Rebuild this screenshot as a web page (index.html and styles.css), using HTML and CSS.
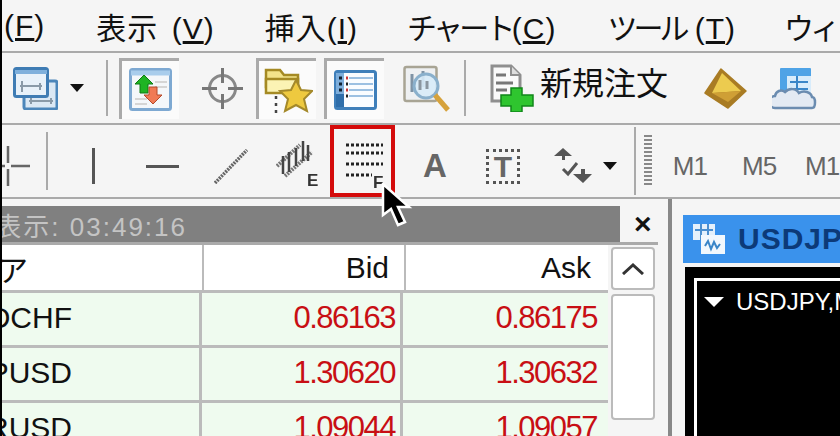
FILE: index.html
```html
<!DOCTYPE html>
<html lang="ja">
<head>
    <meta charset="UTF-8">
    <title>MetaTrader</title>
    <link rel="stylesheet" href="styles.css">
</head>
<body>
    <div class="edge"></div>
    <div class="app">
        <div class="menu">
            <span class="menu-clip">(<u>F</u>)</span>
            <span class="m-view">表示 (<u>V</u>)</span>
            <span class="m-insert">挿入(<u>I</u>)</span>
            <span class="m-chart"><span class="kana">チャート</span>(<u>C</u>)</span>
            <span class="m-tools"><span class="kana-tight">ツール</span> (<u>T</u>)</span>
            <span class="m-win kana">ウィンドウ</span>
        </div>

        <!-- main toolbar -->
        <div class="toolbar tb-main">
            <svg class="i-profiles" width="45" height="43" viewBox="0 0 45 43">
                <rect x="11" y="14" width="33" height="28" rx="2" fill="#dbe8f4" stroke="#4c86ba" stroke-width="3"/>
                <path d="M16 34h24M18 31v6M38 31v6" stroke="#8a9aa8" stroke-width="2" fill="none"/>
                <rect x="1.5" y="1.5" width="33" height="28" rx="2" fill="#e8f1f9" stroke="#3f7cb4" stroke-width="3"/>
                <path d="M2 5h32" stroke="#7fb0dc" stroke-width="4"/>
                <path d="M9 14v11M7 19h22M27 16v7" stroke="#8a9aa8" stroke-width="2" fill="none"/>
            </svg>
            <span class="arrow i-drop"></span>
            <span class="sep s-one"></span>
            <span class="toggle t-watch">
                <svg width="43" height="43" viewBox="0 0 43 43">
                    <rect x="1.5" y="1.5" width="40" height="40" rx="2" fill="#f4f7fa" stroke="#7ea9d2" stroke-width="3"/>
                    <path d="M2 5h39" stroke="#a9cdec" stroke-width="5"/>
                    <path d="M26 14h12M26 19h12M6 31h12M6 36h12" stroke="#d5d5d5" stroke-width="2"/>
                    <path d="M15 7l9 9h-5v9h-8v-9H6z" fill="#1fb424" stroke="#0f7a14"/>
                    <path d="M24 36l9-9h-5v-8h-8v8h-5z" fill="#f07a55" stroke="#b4492b"/>
                </svg>
            </span>
            <svg class="i-cross" width="43" height="43" viewBox="0 0 43 43">
                <circle cx="21.5" cy="21.5" r="13" fill="none" stroke="#888" stroke-width="3"/>
                <path d="M21.5 1v15M21.5 27v15M1 21.5h15M27 21.5h15" stroke="#777" stroke-width="3"/>
            </svg>
            <span class="toggle t-nav">
                <svg width="50" height="50" viewBox="0 0 50 50">
                    <path d="M3 5h14l4 5h14v12H3z" fill="#f3e38a" stroke="#a58a24" stroke-width="2.5"/>
                    <path d="M3 14h32v14H3z" fill="#fbf3b4" stroke="#a58a24" stroke-width="2.5"/>
                    <path d="M13 31v3M13 38v3M13 45v3" stroke="#444" stroke-width="2.5"/>
                    <path d="M33 15l5 10 11 1-8 8 3 12-11-6-11 6 3-12-8-8 11-1z" fill="#eec93f" stroke="#a4892a" stroke-width="2"/>
                </svg>
            </span>
            <span class="toggle t-data">
                <svg width="43" height="40" viewBox="0 0 43 40">
                    <rect x="1.5" y="1.5" width="40" height="37" rx="2" fill="#fafcff" stroke="#3f7fba" stroke-width="3"/>
                    <rect x="2" y="3" width="8" height="34" fill="#7eaedb"/>
                    <rect x="2" y="24" width="8" height="13" fill="#2f6eaa"/>
                    <path d="M15 8h24M15 14h24M15 20h24M15 26h24" stroke="#9cc0e2" stroke-width="2"/>
                    <path d="M5 8h3M5 14h3M5 20h3" stroke="#123" stroke-width="3"/>
                    <path d="M12 8h2M12 20h2" stroke="#c33" stroke-width="3"/>
                    <path d="M12 14h2M12 26h2" stroke="#222" stroke-width="3"/>
                </svg>
            </span>
            <svg class="i-tester" width="48" height="49" viewBox="0 0 48 49">
                <rect x="1.5" y="3" width="32" height="34" rx="2" fill="#eef0f2" stroke="#a8a494" stroke-width="2.5"/>
                <path d="M9 10v18M20 7v16" stroke="#7f93a5" stroke-width="3"/>
                <circle cx="23" cy="22" r="12" fill="#d7ebf8" fill-opacity=".9" stroke="#8ab0cc" stroke-width="3"/>
                <path d="M17 16v10M24 17v8" stroke="#8a96a0" stroke-width="3"/>
                <path d="M32 31l13 15" stroke="#d6a23c" stroke-width="5"/>
            </svg>
            <span class="sep s-two"></span>
            <svg class="i-order" width="44" height="48" viewBox="0 0 44 48">
                <path d="M2 2h19l9 9v26H2z" fill="#fafafa" stroke="#8f8f8f" stroke-width="3"/>
                <path d="M21 2v9h9" fill="#ddd" stroke="#8f8f8f" stroke-width="2"/>
                <path d="M6 11h10M6 19h17M6 26h11" stroke="#777" stroke-width="3"/>
                <path d="M21 24h11v7h11v11H32v6H21v-6H11V31h10z" fill="#2fc52f" stroke="#10871a" stroke-width="1.5"/>
            </svg>
            <span class="order-label">新規注文</span>
            <svg class="i-gold" width="43" height="41" viewBox="0 0 43 41">
                <path d="M17 1L42 23 24 40 1 25z" fill="#a97c24" stroke="#a97c24" stroke-width="1.5" stroke-linejoin="round"/>
                <path d="M18 5L37 23 8 25z" fill="#eccb4f"/>
                <path d="M8 25L37 23 24 34z" fill="#cf9f35"/>
            </svg>
            <svg class="i-cloud" width="45" height="43" viewBox="0 0 45 43">
                <rect x="8" y="1" width="31" height="31" rx="1" fill="#4fa3e6"/>
                <rect x="15" y="9" width="24" height="22" fill="#d8ecfb"/>
                <path d="M18 15h18M18 22h18M25 9v22" stroke="#3a86c8" stroke-width="2"/>
                <path d="M3 41a6 6 0 0 1 0-12c1-5 6-7 10-4 4-4 11-4 14 1 5-3 12-1 13 4 4 0 4 11 0 11z" fill="#e3eaf3" stroke="#6b8cb0" stroke-width="2.5"/>
            </svg>
        </div>

        <!-- drawing toolbar -->
        <div class="toolbar tb-draw">
            <svg class="i-crosshair low" width="28" height="40" viewBox="0 0 28 40">
                <path d="M6 0v17M6 23v17M0 20h3M9 20h19" stroke="#666" stroke-width="2.5"/>
            </svg>
            <span class="sep s-three"></span>
            <span class="tool-vline low"></span>
            <span class="tool-hline low"></span>
            <svg class="i-trend low" width="34" height="35" viewBox="0 0 34 35">
                <path d="M1 34L33 1" stroke="#666" stroke-width="3.5" stroke-dasharray="2 1"/>
            </svg>
            <svg class="i-equi" width="43" height="50" viewBox="0 0 43 50">
                <path d="M1 27L24 6M9 37L36 13" stroke="#777" stroke-width="4" stroke-dasharray="2 1"/>
                <path d="M7 17v18M13 13v20M20 9v18M27 2v20M32 6v16" stroke="#444" stroke-width="2.5"/>
                <text class="tool-mark" x="31" y="47">E</text>
            </svg>
            <span class="active-tool">
                <svg width="44" height="46" viewBox="0 0 44 46">
                    <path d="M0 2h37M0 10h37M0 21h37" stroke="#222" stroke-width="3" stroke-dasharray="3 2"/>
                    <path d="M0 32h26" stroke="#222" stroke-width="3" stroke-dasharray="3 2"/>
                    <text class="tool-mark" x="27" y="45">F</text>
                </svg>
                <svg class="cursor" width="32" height="44" viewBox="0 0 32 44">
                    <path d="M2 1v31l8-6 7 16 7-3-7-15h11z" fill="#000" stroke="#fff" stroke-width="2.5"/>
                </svg>
            </span>
            <span class="tool-a low">A</span>
            <span class="tool-t low">T</span>
            <svg class="i-arrows low" width="38" height="36" viewBox="0 0 38 36">
                <path d="M9 0l9 8H0z M8 8h3v4H8z" fill="#555"/>
                <path d="M9 21l5 5 9-11" fill="none" stroke="#555" stroke-width="3"/>
                <path d="M29 35l9-9H19z M27 21h4v5h-4z" fill="#555"/>
            </svg>
            <span class="arrow i-drop-two low"></span>
            <span class="sep s-four"></span>
            <span class="grip"></span>
            <span class="period p-one low">M1</span>
            <span class="period p-five low">M5</span>
            <span class="period p-fifteen low">M15</span>
        </div>

        <div class="workspace">
            <div class="watch">
                <div class="watch-head">
                    <div class="watch-title"><span>気配値表示: 03:49:16</span></div>
                    <span class="watch-close">×</span>
                </div>
                <div class="watch-body">
                    <div class="quotes">
                        <div class="quote-head">
                            <div class="cell-pair"><span class="clip-head">通貨ペア</span></div>
                            <div class="cell-bid">Bid</div>
                            <div class="cell-ask">Ask</div>
                        </div>
                        <div class="quote-row">
                            <div class="cell-pair"><span class="clip">USDCHF</span></div>
                            <div class="price">0.86163</div>
                            <div class="price">0.86175</div>
                        </div>
                        <div class="quote-row">
                            <div class="cell-pair"><span class="clip">GBPUSD</span></div>
                            <div class="price">1.30620</div>
                            <div class="price">1.30632</div>
                        </div>
                        <div class="quote-row">
                            <div class="cell-pair"><span class="clip">EURUSD</span></div>
                            <div class="price">1.09044</div>
                            <div class="price">1.09057</div>
                        </div>
                    </div>
                    <div class="scrollbar">
                        <div class="scroll-up">
                            <svg width="22" height="12" viewBox="0 0 22 12"><path d="M1 11L11 2l10 9" fill="none" stroke="#333" stroke-width="3"/></svg>
                        </div>
                        <div class="scroll-thumb"></div>
                    </div>
                </div>
            </div>
            <div class="chart-area">
                <div class="chart-window">
                    <div class="chart-title">
                        <svg width="32" height="30" viewBox="0 0 32 30">
                            <rect x="0" y="0" width="22" height="16" fill="#e4f0fb"/>
                            <path d="M2 6h18M8 0v16M15 0v16" stroke="#4b8fd0" stroke-width="2"/>
                            <rect x="8" y="11" width="24" height="19" fill="#f2f8fd"/>
                            <path d="M12 22l3-5 3 8 3-7 3 6 3-4" fill="none" stroke="#3a86c8" stroke-width="2"/>
                        </svg>
                        <span>USDJPY,M15</span>
                    </div>
                    <div class="chart-black">
                        <div class="chart-frame">
                            <div class="chart-label"><span class="tri"></span><span>USDJPY,M15</span></div>
                        </div>
                    </div>
                </div>
            </div>
        </div>
    </div>
</body>
</html>
```

FILE: styles.css
```css
body {
    margin: 0;
    width: 840px;
    height: 436px;
    display: flex;
    overflow: hidden;
    background-color: #f5f5f5;
    font-family: 'Liberation Sans', 'Noto Sans CJK JP', sans-serif;
    color: #111;
}
svg {
    display: block;
    flex-shrink: 0;
    filter: blur(0.4px);
}
.edge {
    width: 2px;
    background-color: #000;
    flex-shrink: 0;
}
.app {
    width: 838px;
    display: flex;
    flex-direction: column;
}

/* menu */
.menu {
    height: 53px;
    flex-shrink: 0;
    display: flex;
    align-items: center;
    font-size: 30px;
    letter-spacing: 1px;
    white-space: nowrap;
    border-bottom: 2px solid #aaa;
    box-sizing: border-box;
    overflow: hidden;
}
.menu-clip { margin-left: 2px; }
.m-view { margin-left: 51px; word-spacing: 4px; }
.m-insert { margin-left: 50px; }
.m-chart { margin-left: 49px; }
.m-tools { margin-left: 51px; }
.m-win { margin-left: 48px; }
.kana { letter-spacing: -3.75px; }
.kana-tight { letter-spacing: -4px; }

/* toolbars */
.toolbar {
    display: flex;
    align-items: center;
    box-sizing: border-box;
    border-bottom: 2px solid #aaa;
    flex-shrink: 0;
    white-space: nowrap;
}
.tb-main { height: 72px; overflow: hidden; }
.tb-draw { height: 74px; }
.low { margin-top: 10px; }
.arrow {
    width: 0;
    height: 0;
    border-left: 7px solid transparent;
    border-right: 7px solid transparent;
    border-top: 8px solid #111;
    flex-shrink: 0;
}
.sep {
    width: 2px;
    background-color: #aaa;
    flex-shrink: 0;
}
.toggle {
    width: 60px;
    height: 61px;
    box-sizing: border-box;
    border-top: 3px solid #aaa;
    border-left: 3px solid #aaa;
    background-color: #fbfbfb;
    display: flex;
    align-items: center;
    justify-content: center;
    flex-shrink: 0;
}
.i-profiles { margin-left: 11px; }
.i-drop { margin-left: 12px; }
.s-one { margin-left: 22px; height: 56px; }
.t-watch { margin-left: 11px; }
.i-cross { margin-left: 22px; }
.t-nav { margin-left: 12px; }
.t-data { margin-left: 8px; }
.i-tester { margin-left: 19px; }
.s-two { margin-left: 13px; height: 56px; }
.i-order { margin-left: 24px; }
.order-label {
    margin-left: 6px;
    margin-bottom: 8px;
    font-size: 32px;
    line-height: 36px;
}
.i-gold { margin-left: 36px; }
.i-cloud { margin-left: 25px; }

.i-crosshair { margin-left: 0; }
.s-three { margin-left: 16px; height: 58px; }
.tool-vline {
    margin-left: 44px;
    width: 3px;
    height: 36px;
    background-color: #555;
    flex-shrink: 0;
}
.tool-hline {
    margin-left: 51px;
    width: 33px;
    height: 3px;
    background-color: #555;
    flex-shrink: 0;
}
.i-trend { margin-left: 35px; }
.i-equi { margin-left: 28px; margin-top: 6px; }
.tool-mark {
    font-family: 'Liberation Sans', sans-serif;
    font-size: 17px;
    font-weight: bold;
    fill: #333;
}
.active-tool {
    position: relative;
    margin-left: 11px;
    width: 65px;
    height: 72px;
    box-sizing: border-box;
    border: 4px solid #d40b0b;
    padding: 14px 0 0 12px;
    flex-shrink: 0;
}
.cursor {
    position: absolute;
    left: 47px;
    top: 54px;
    z-index: 2;
    filter: none;
}
.tool-a {
    margin-left: 28px;
    font-size: 33px;
    font-weight: bold;
    color: #666;
}
.tool-t {
    margin-left: 39px;
    width: 28px;
    height: 29px;
    border: 3px dotted #555;
    font-size: 30px;
    line-height: 29px;
    font-weight: bold;
    color: #666;
    text-align: center;
    flex-shrink: 0;
}
.i-arrows { margin-left: 34px; }
.i-drop-two { margin-left: 11px; }
.s-four { margin-left: 17px; height: 68px; }
.grip {
    margin-left: 8px;
    width: 8px;
    height: 52px;
    background: repeating-linear-gradient(#888 0 2px, #f5f5f5 2px 4px);
    flex-shrink: 0;
}
.period {
    font-size: 26px;
    letter-spacing: -1px;
    color: #666;
    flex-shrink: 0;
}
.p-one { margin-left: 21px; }
.p-five { margin-left: 35px; }
.p-fifteen { margin-left: 29px; }

/* market watch */
.workspace {
    flex: 1;
    display: flex;
    min-height: 0;
}
.watch {
    width: 670px;
    box-sizing: border-box;
    padding-top: 7px;
    border-right: 4px solid #888;
    flex-shrink: 0;
}
.watch-head {
    display: flex;
    height: 36px;
}
.watch-title {
    width: 618px;
    background-color: #808080;
    color: #c4c4c4;
    font-size: 26px;
    display: flex;
    align-items: center;
    letter-spacing: 2px;
}
.watch-title span {
    width: 185px;
    display: flex;
    justify-content: flex-end;
    overflow: hidden;
    white-space: nowrap;
}
.watch-close {
    margin-left: 14px;
    font-size: 30px;
    line-height: 36px;
    font-weight: bold;
}
.watch-body {
    display: flex;
    width: 656px;
    border-top: 3px solid #aaa;
    box-sizing: border-box;
}
.quotes {
    width: 606px;
    flex-shrink: 0;
}
.quote-head {
    display: grid;
    grid-template-columns: 202px 202px 1fr;
    height: 45px;
    background-color: #fff;
    font-size: 30px;
    border-bottom: 3px solid #bbb;
    align-items: stretch;
}
.quote-head > div {
    display: flex;
    align-items: center;
    justify-content: flex-end;
    border-right: 2px solid #bbb;
    padding-right: 15px;
}
.quote-head > .cell-pair { justify-content: flex-start; padding-right: 0; }
.quote-head > .cell-ask { border-right: none; padding-right: 17px; }
.quote-row {
    display: grid;
    grid-template-columns: 200px 201px 1fr;
    height: 52px;
    background-color: #effbef;
    border-bottom: 3px solid #bbb;
    font-size: 30px;
}
.quote-row > div {
    display: flex;
    align-items: center;
    border-right: 3px solid #bbb;
    padding-bottom: 3px;
    box-sizing: border-box;
}
.quote-row > div:last-child { border-right: none; }
.clip, .clip-head {
    display: flex;
    justify-content: flex-end;
    overflow: hidden;
    white-space: nowrap;
}
.clip { width: 70px; }
.clip-head { width: 26px; }
.price {
    justify-content: flex-end;
    padding-right: 5px;
    color: #c80f14;
    font-size: 31px;
    letter-spacing: -1.5px;
}
.quote-row > .price:last-child { padding-right: 11px; }
.scrollbar {
    margin-left: 3px;
    width: 44px;
    display: flex;
    flex-direction: column;
    gap: 4px;
    flex-shrink: 0;
}
.scroll-up, .scroll-thumb {
    box-sizing: border-box;
    background-color: #fff;
    border: 2px solid #bbb;
    border-radius: 4px;
}
.scroll-up {
    height: 43px;
    margin-top: 2px;
    display: flex;
    align-items: center;
    justify-content: center;
}
.scroll-thumb { height: 126px; }

/* chart */
.chart-area {
    flex: 1;
    padding: 16px 0 0 11px;
    min-width: 0;
    overflow: hidden;
}
.chart-window { height: 100%; }
.chart-title {
    height: 48px;
    width: 200px;
    background-color: #3a92ec;
    display: flex;
    align-items: center;
    padding-left: 10px;
    gap: 13px;
    font-size: 30px;
    font-weight: bold;
    color: #0c3a78;
    letter-spacing: 1px;
    white-space: nowrap;
    margin-bottom: 4px;
}
.chart-black {
    background-color: #000;
    height: 200px;
    padding: 11px 0 0 9px;
    margin-left: 2px;
}
.chart-frame {
    height: 100%;
    box-sizing: border-box;
    border-left: 3px solid #fff;
    border-top: 3px solid #fff;
    padding: 7px 0 0 7px;
}
.chart-label {
    display: flex;
    align-items: center;
    gap: 12px;
    color: #fff;
    font-size: 24px;
    white-space: nowrap;
}
.tri {
    width: 0;
    height: 0;
    border-left: 10px solid transparent;
    border-right: 10px solid transparent;
    border-top: 10px solid #fff;
    flex-shrink: 0;
}
```
